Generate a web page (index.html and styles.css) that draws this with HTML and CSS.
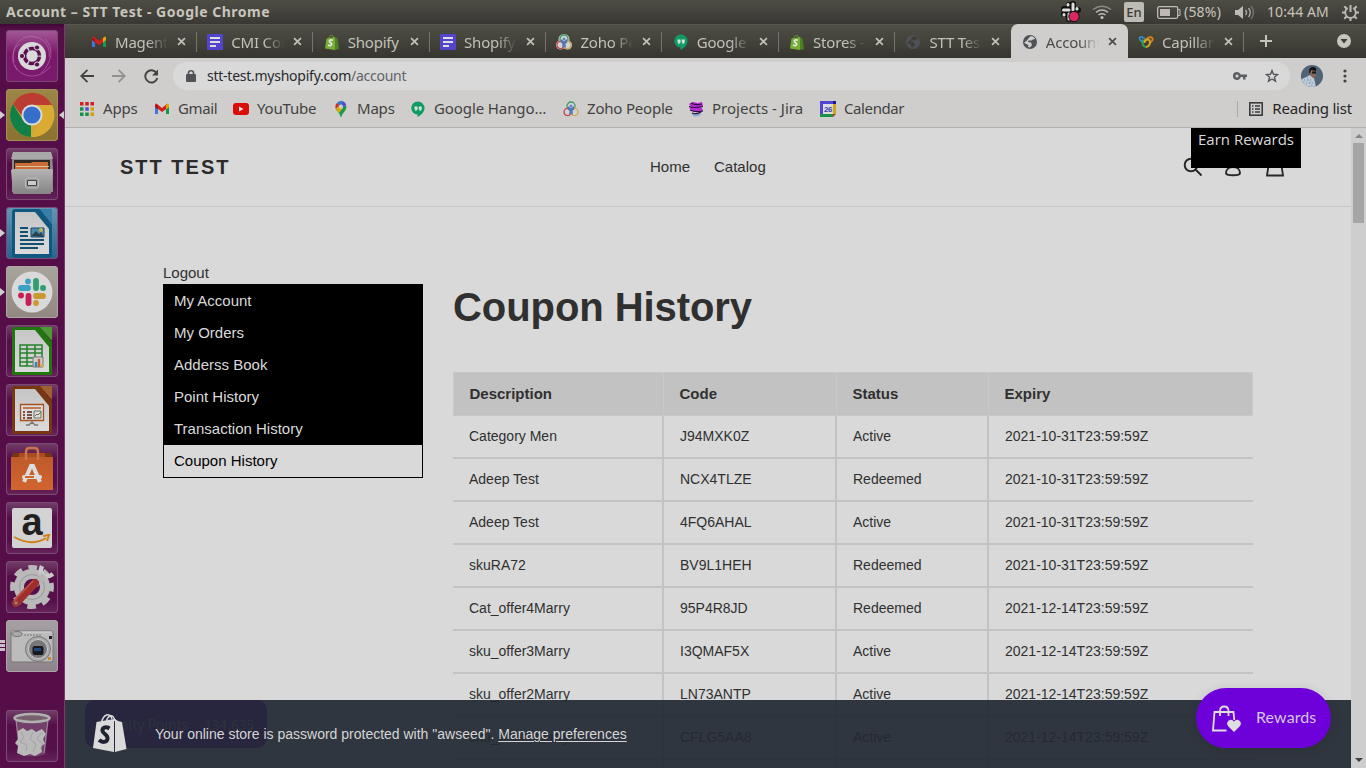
FILE: index.html
```html
<!DOCTYPE html>
<html lang="en">
<head>
<meta charset="utf-8">
<title>Account – STT Test</title>
<link rel="stylesheet" href="styles.css">
</head>
<body>
<svg class="defs" aria-hidden="true">
  <defs>
    <linearGradient id="steel" x1="0" y1="0" x2="0" y2="1"><stop offset="0" stop-color="#b4b4b4"/><stop offset="1" stop-color="#858585"/></linearGradient>
    <linearGradient id="orangeBag" x1="0" y1="0" x2="0" y2="1"><stop offset="0" stop-color="#bd5a2a"/><stop offset="1" stop-color="#d2652f"/></linearGradient>
    <linearGradient id="paper" x1="0" y1="0" x2="0" y2="1"><stop offset="0" stop-color="#c6c6c6"/><stop offset="1" stop-color="#dadada"/></linearGradient>
  </defs>
  <symbol id="gmail" viewBox="0 0 16 16"><path fill="#3b78d8" d="M1 4v9h3V7z"/><path fill="#12994b" d="M12 7v6h3V4z"/><path fill="#d5211c" d="M1 3l1.500-.5L8 7l5.500-4.500L12 8.200 8 11 4 8z"/><path fill="#a5120f" d="M1 3.500L4 5v3.500L1 6z"/><path fill="#dda80c" d="M12 4l2-1.500 1 1V6l-3 2.500z"/></symbol>
  <symbol id="forms" viewBox="0 0 16 16"><rect width="16" height="16" rx="1" fill="#5344cd"/><path stroke="#ddd" stroke-width="2" d="M3 4h10M3 8h10M3 12h6"/></symbol>
  <symbol id="shopify" viewBox="0 0 16 16"><path fill="none" stroke="#6aa12e" d="M5 5C5 0 10 0 10 5"/><path fill="#76ad34" d="M2.500 4.500L11 3v13L1 14.500z"/><path fill="#4d8022" d="M11 3l2.500 1.500L15 15l-4 1z"/><path fill="none" stroke="#e5e5e5" stroke-width="1.700" d="M9 6.300C6.500 5 5 6.500 5.500 7.700s2.500 1.100 2.200 2.700-2 1.600-3.700.7"/></symbol>
  <symbol id="zoho" viewBox="0 0 16 16"><circle cx="8" cy="5.500" r="5.500" fill="#d3d3d3"/><circle cx="4.500" cy="11" r="4.500" fill="#d3d3d3"/><circle cx="11.500" cy="11" r="4.500" fill="#d3d3d3"/><g fill="none" stroke-width="1.300"><circle cx="8" cy="5" r="4" stroke="#3a9b67"/><circle cx="4.600" cy="11" r="3.600" stroke="#c5414b"/><circle cx="11.400" cy="11" r="3.600" stroke="#cba84d"/></g><path fill="#5577b4" d="M5 5.500h6v3L9.500 10l.5 4-2-1.500L6 14l.5-4L5 8.500z"/><circle cx="8" cy="5" r="1.600" fill="#5577b4" stroke="#c3cde0" stroke-width=".7"/></symbol>
  <symbol id="hangouts" viewBox="0 0 16 16"><path fill="#109b63" d="M8 .5a6.500 6.500 0 0 0-.5 13V16c4-2 7-5 7-9A6.500 6.500 0 0 0 8 .5z"/><path fill="#d5e4dc" d="M4.500 5.500h3v3L6 10H5l.7-1.500H4.500zM8.700 5.500h3v3L10.200 10h-1l.7-1.500H8.700z"/></symbol>
  <symbol id="globe" viewBox="0 0 16 16"><circle cx="8" cy="8" r="7" fill="#4f5157"/><path fill="#cfcfcd" d="M8 2.500c2-.8 4 .2 5.200 2.500L11 5.500 9.500 6.500 6.500 6.500 6 8l3 .5 1 2.500-2 2.500-2-.5 .5-2L3 9.500 2.500 8l2-1z"/></symbol>
  <symbol id="globeDim" viewBox="0 0 16 16"><circle cx="8" cy="8" r="7" fill="#505158"/><path fill="#3d3e38" d="M8 2.500c2-.8 4 .2 5.200 2.500L11 5.500 9.500 6.500 6.500 6.500 6 8l3 .5 1 2.500-2 2.500-2-.5 .5-2L3 9.500 2.500 8l2-1z"/></symbol>
  <symbol id="capillary" viewBox="0 0 16 16"><g fill="none" stroke-width="1.900"><path stroke="#3487b8" d="M8 6C5 2.500 1 2 1.500 4.500S4 7.500 6 7"/><path stroke="#db7c18" d="M7 8c0-3 4-5.500 6.500-4.500s.5 4-2 6"/><path stroke="#2da259" d="M5 5.500c-2 4 .5 7.500 3 7.500"/><path stroke="#d3aa24" d="M8 13c3 0 5-4 3.500-6.500S6 6.500 6.500 9"/></g></symbol>
  <symbol id="close" viewBox="0 0 10 10"><path stroke="currentColor" stroke-width="1.900" d="M1.200 1.200l7.600 7.600M8.800 1.200L1.200 8.800"/></symbol>
  <symbol id="apps" viewBox="0 0 14 14"><path fill="#d31f1f" d="M0 0h3.500v3.500H0zM5.250 0h3.500v3.500h-3.500zM10.500 0H14v3.500h-3.500z"/><path fill="#129348" d="M0 5.250h3.500v3.500H0zM0 10.500h3.500V14H0zM5.250 10.500h3.500V14h-3.500z"/><path fill="#4f52cd" d="M5.250 5.250h3.500v3.500h-3.500z"/><path fill="#d19f12" d="M10.500 5.250H14v3.500h-3.500zM10.500 10.500H14V14h-3.500z"/></symbol>
  <symbol id="youtube" viewBox="0 0 16 12"><rect width="16" height="12" rx="3" fill="#d90d0a"/><path fill="#e4e4e4" d="M6 3.500v5L10.500 6z"/></symbol>
  <symbol id="maps" viewBox="0 0 12 16"><path fill="#169c4a" d="M.8 8C2 10.500 5 12 5.500 16h1C7 12 11.500 10 11.500 5.500L9 3.500z"/><path fill="#5050d1" d="M6 0a6 6 0 0 1 5.300 4L8 7 4 3z"/><path fill="#3479cf" d="M6 0Q3.500 0 1.800 2l3 3L8 .5z"/><path fill="#cf2c26" d="M1.800 2A6 6 0 0 0 .8 8l4-3.500z"/><path fill="#d7a90e" d="M.8 8l4-4L8 7l-4 5z"/><circle cx="6" cy="5.700" r="2.100" fill="#d0cfcd"/></symbol>
  <symbol id="jira" viewBox="0 0 16 16"><path fill="#b92ad2" d="M1 3l4-2 5 1 4-1 1 4-2 1 2 3-2 2-9-1-3-3 2-1z"/><path fill="#85a5d2" d="M3 12c4 2 6 1 11 0l-3 3-5 .5z"/><path fill="none" stroke="#271042" stroke-width="1.200" d="M3 2c3 2 7 2 11 1M1 5.500c4 2 9 1 14 0M2 9c4 2 8 2 13 1M4 12c3 1 6 1 9-1"/></symbol>
  <symbol id="calendar" viewBox="0 0 16 16"><path fill="#5146d3" d="M0 0h16v4H4v9H0z"/><path fill="#1f1a91" d="M13 0h3v3h-3z"/><path fill="#d2a612" d="M13 3h3v10h-3z"/><path fill="#189449" d="M0 13h13v3H0z"/><path fill="#d32724" d="M13 13h3l-3 3z"/><path fill="#dcdcdc" d="M3 3h10v10H3z"/><text x="8" y="11" class="cal-day">26</text></symbol>
  <symbol id="bag" viewBox="0 0 34 40"><path fill="none" stroke="#dadada" stroke-width="1.500" d="M8.500 10C10 1 17-1 19 6M13 10C14 3 20-1 22 8"/><path fill="#dadada" d="M3.500 9L21 6v33L0 35z"/><path fill="#dadada" d="M22 6l3 2 4 1 4.500 27-11.500 3z"/><path fill="none" stroke="#202431" stroke-width="4" d="M16.500 15.500c-4-2.500-7.500-.5-7 2.500s5.500 3.500 5 7.500-5 4.500-8.500 1.500"/></symbol>
</svg>

<header class="system-bar">
  <div class="window-title">Account – STT Test - Google Chrome</div>
  <div class="indicators">
    <svg class="ind-slack" width="22" height="22" viewBox="0 0 22 22"><g stroke-linecap="round"><path stroke="#111" stroke-width="6" d="M9 4v5M13 3v6M4 8h5M12 9h6M4 13h4M9 13v5"/><path stroke="#ddd" stroke-width="3" d="M8 3.500v.5M13 3v6M3.500 9H9M17 7.500v.5M4 14v-.5M9 13v5"/></g><circle cx="14" cy="15.500" r="5.200" fill="#d72863" stroke="#111"/></svg>
    <svg class="ind-wifi" width="20" height="14" viewBox="0 0 20 14"><g fill="none" stroke-width="1.500"><path stroke="#8b8a84" d="M1 4.500q9-6.500 18 0"/><path stroke="#b9b7b0" d="M4 7.300q6-4.500 12 0M6.500 10q3.500-2.600 7 0"/></g><circle cx="10" cy="12.500" r="1.500" fill="#c8c5bc"/></svg>
    <span class="keyboard">En</span>
    <svg class="ind-battery" width="24" height="13" viewBox="0 0 24 13"><rect x=".7" y=".7" width="20" height="11.600" rx="1.500" fill="none" stroke="#bdbbb4" stroke-width="1.300"/><path fill="#bdb9b2" d="M3 3h10v7H3z"/><path fill="none" stroke="#bdbbb4" d="M21 3.500h2v6h-2"/></svg>
    <span class="percent">(58%)</span>
    <svg class="ind-sound" width="20" height="15" viewBox="0 0 20 15"><path fill="#bdbbb4" d="M0 5h3l5-4v13l-5-4H0z"/><g fill="none" stroke="#a8a69f" stroke-width="1.500"><path d="M10.500 5q2 2.500 0 5M13.500 3q3.500 4.500 0 9"/><path stroke="#73716b" d="M16 1q5 6.500 0 13"/></g></svg>
    <span class="clock">10:44 AM</span>
    <svg class="ind-gear" width="17" height="17" viewBox="0 0 17 17"><g fill="none" stroke="#bdbbb4"><path stroke-width="1.800" d="M5.800 4A5.300 5.300 0 1 0 11.200 4"/><path stroke-width="2" d="M8.500 1v7M8.500 14v3M0 8.500h3M14 8.500h3M2.300 2.300l2.200 2.200M12.500 12.500l2.200 2.200M2.300 14.700l2.200-2.200M12.500 4.500l2.200-2.200"/></g></svg>
  </div>
</header>

<div class="desktop">
<nav class="launcher">
  <div class="tile dash"><svg viewBox="0 0 52 52"><g fill="none" stroke="#b980af" stroke-opacity=".55"><path d="M8 32C4 12 20 4 29 7M39 9c12 12 3 28-4 34M45 36C30 54 11 44 9 35M28 7c10 0 17 11 15 20M11 40C2 27 9 16 14 14"/></g><circle cx="26" cy="26" r="14" fill="#d9d9d9"/><circle cx="26" cy="26" r="7.500" fill="none" stroke="#5a1150" stroke-width="3.500" stroke-dasharray="14.300 1.400" transform="rotate(5 26 26)"/><g fill="#5a1150" stroke="#d9d9d9"><circle cx="16" cy="26" r="2.600"/><circle cx="31" cy="17.500" r="2.600"/><circle cx="31" cy="34.500" r="2.600"/></g></svg></div>
  <div class="tile chrome running focused"><svg viewBox="0 0 52 52"><circle cx="26" cy="26" r="22" fill="#d5a72d"/><path fill="#bb3c33" d="M7 15A22 22 0 0 1 46 16H26L16 27z"/><path fill="#118047" d="M7 15l10 16 8 5v12A22 22 0 0 1 7 15z"/><path fill="#d9ab32" d="M26 16h20a22 22 0 0 1-20.500 32L35 31z"/><circle cx="26" cy="26" r="10.500" fill="#dadada"/><circle cx="26" cy="26" r="8.600" fill="#356fc9"/></svg></div>
  <div class="tile"><svg viewBox="0 0 52 52"><path fill="#8b8b8b" d="M6 6h40l1 16v22H6z"/><path fill="#a9a9a9" d="M7 4h38l2 7H5z"/><path fill="#2e2925" d="M8 12h36v12H8z"/><path fill="#ca6e35" d="M9 15h16l1-1h16v8H9z"/><path stroke="#e0c3a4" d="M10 18.500h33"/><path fill="url(#steel)" d="M7 21h38l2 1-2 24H7L5 22z"/><rect x="19.500" y="30" width="13" height="10" rx="2" fill="#999" stroke="#bbb"/><path fill="#ccc" stroke="#444" d="M21.500 32.500h9v5h-9z"/></svg></div>
  <div class="tile writer running"><svg viewBox="0 0 52 52"><path fill="#125780" d="M8 2h26l12 15v31q0 3-3 3H9q-3 0-3-3V4z"/><path fill="url(#paper)" d="M9 5h20l14 17v25H9z"/><path fill="#397ea7" d="M34 2h12v15z"/><g stroke="#134f70" stroke-width="2"><path d="M14 21h8M14 25h8M14 29h8M14 33h24M14 37h24M14 41h18"/></g><path fill="#518bab" stroke="#134f70" d="M25 21h13v9H25z"/><path fill="#28434e" d="M25 29l5-5 3 3 2-2 3 5z"/><circle cx="35" cy="23" r="2" fill="#c1b44c"/></svg></div>
  <div class="tile slack running"><svg viewBox="0 0 52 52"><circle cx="26" cy="26" r="20.500" fill="#d9d9d9"/><g stroke-width="5.800" stroke-linecap="round"><path stroke="#3ba1c4" d="M15 22h7M22 15.300v.1"/><path stroke="#329d70" d="M30 15v7M37 22h.1"/><path stroke="#c61f55" d="M15 29.500h.1M22.500 30v7"/><path stroke="#c99932" d="M30 30h7M30 37v.1"/></g></svg></div>
  <div class="tile"><svg viewBox="0 0 52 52"><path fill="#217610" d="M8 2h26l12 15v31q0 2-3 2H9q-3 0-3-2V4z"/><path fill="url(#paper)" d="M9 5h20l14 17v25H9z"/><path fill="#4e9a36" d="M34 2h12v14z"/><path fill="none" stroke="#24822c" stroke-width="1.500" d="M14 20h22v21H14zM21 20v21M29 20v21M14 24h22M14 28h22M14 33h22M14 37h22"/><path fill="#ccc" stroke="#777" d="M27 32h10v10H27z"/><path stroke="#3586bb" stroke-width="2.500" d="M30 37v5"/><path stroke="#c36034" stroke-width="2.500" d="M33 34v8"/><path stroke="#d2af28" stroke-width="2" d="M36 39v3"/></svg></div>
  <div class="tile"><svg viewBox="0 0 52 52"><path fill="#783713" d="M8 2h26l12 15v31q0 2-3 2H9q-3 0-3-2V4z"/><path fill="url(#paper)" d="M9 5h20l14 17v25H9z"/><path fill="#a0602f" d="M34 2h12v14z"/><path fill="#ddd" stroke="#a6521f" stroke-width="1.300" d="M14.500 20.500h23v16h-23z"/><path stroke="#bd612b" stroke-width="1.600" d="M17 24h18"/><path stroke="#552414" stroke-width="1.600" d="M17 28h2M21 28h5M17 31h2M21 31h5M17 34h2M21 34h5"/><path fill="none" stroke="#65755f" d="M28 27h7v7h-7zM29 32l2-2 1 1 3-3"/><path fill="none" stroke="#777" stroke-width="1.500" d="M20 41h3l3-3 3 3h3"/></svg></div>
  <div class="tile"><svg viewBox="0 0 52 52"><path fill="#783514" d="M7 10h38l2 5H5z"/><path fill="#a94d22" d="M13 10h26v5H13z"/><path fill="url(#orangeBag)" d="M5 14h42v33H5z"/><path fill="none" stroke="#cc744b" stroke-width="2.500" d="M20 17V9q0-4 4-4h4q4 0 4 4v8"/><path fill="none" stroke="#ddd" stroke-width="4" d="M18 39l7-16h2l7 16"/><path stroke="#ddd" stroke-width="4" stroke-linecap="round" d="M18 34h16"/><path stroke="#d26427" stroke-width="2" d="M19 34h9"/></svg></div>
  <div class="tile"><svg viewBox="0 0 52 52"><rect x="6" y="6" width="40" height="40" rx="2" fill="#d3d3d3"/><text x="26" y="33" class="amazon-a">a</text><path fill="none" stroke="#d18217" stroke-width="2" d="M8 35q18 10 32 1M37 34l6-1-2 6"/></svg></div>
  <div class="tile"><svg viewBox="0 0 52 52"><g fill="none" stroke="#b9b9b9"><circle cx="26" cy="26" r="19.500" stroke-width="5" stroke-dasharray="8.500 6.816" transform="rotate(-12 26 26)"/><circle cx="26" cy="26" r="13" stroke-width="10"/></g><circle cx="26" cy="26" r="12.500" fill="none" stroke="#999"/><path fill="none" stroke="#c9c9c9" stroke-width="4.500" d="M36 5c-4 9 4 13 11 8"/><path stroke="#b5b5b5" stroke-width="6" d="M29 24l9-10"/><path stroke="#9f2f2c" stroke-width="8" stroke-linecap="round" d="M10 42l19-20"/><path stroke="#c15349" stroke-width="1.500" d="M8 40l19-20"/><circle cx="10" cy="42" r="1.700" fill="#8d8181"/></svg></div>
  <div class="tile camera"><svg viewBox="0 0 52 52"><rect x="5" y="11" width="42" height="31" rx="2" fill="#bcbcbc" stroke="#777"/><path stroke="#d6d6d6" d="M6 12h40"/><ellipse cx="11" cy="14" rx="5" ry="2.500" fill="#aaa" stroke="#777"/><path stroke="#777" stroke-dasharray="2 1" d="M18 15h17"/><circle cx="32" cy="29" r="12.500" fill="#aaa" stroke="#777"/><circle cx="32" cy="29" r="9.500" fill="#777" stroke="#ccc"/><rect x="26.500" y="26" width="11" height="9" rx="2" fill="#171b21"/><path fill="#204775" d="M28 28h7v3h-7z"/><path fill="#222" d="M43 16h3v3h-3z"/><path fill="#ca882b" d="M42 37h3v3h-3z"/></svg><i class="windows"></i></div>
  <div class="tile trash"><svg viewBox="0 0 52 52"><path fill="#794c73" fill-opacity=".8" d="M9 8h34l-4 36q-13 5-26 0z"/><path stroke="#a08d9d" d="M10 9l4 34M42 9l-4 34"/><path fill="#b9b9b9" d="M12 21l5-3 4 3 5-2 4 3 6-3 4 5-3 5 2 5-4 2 1 6-7 4-5-2-6 2-7-3 1-7-3-3 3-4z"/><path fill="none" stroke="#a2a2a2" d="M15 22l3 5-4 5 7 3-1 6M27 22l-3 7 6 5-3 8M36 22l-5 7 6 5-3 5"/><ellipse cx="26" cy="8" rx="17.500" ry="4" fill="#78606f" stroke="#b1b0b0" stroke-width="2.500"/></svg></div>
</nav>

<main class="browser">
  <div class="tabs">
    <div class="tab"><svg class="icon"><use href="#gmail"/></svg><span>Magento</span><svg class="x"><use href="#close"/></svg></div>
    <div class="tab"><svg class="icon"><use href="#forms"/></svg><span>CMI Con</span><svg class="x"><use href="#close"/></svg></div>
    <div class="tab"><svg class="icon"><use href="#shopify"/></svg><span class="whole">Shopify</span><svg class="x"><use href="#close"/></svg></div>
    <div class="tab"><svg class="icon"><use href="#forms"/></svg><span>Shopify</span><svg class="x"><use href="#close"/></svg></div>
    <div class="tab"><svg class="icon"><use href="#zoho"/></svg><span>Zoho Pe</span><svg class="x"><use href="#close"/></svg></div>
    <div class="tab"><svg class="icon"><use href="#hangouts"/></svg><span>Google</span><svg class="x"><use href="#close"/></svg></div>
    <div class="tab"><svg class="icon"><use href="#shopify"/></svg><span>Stores -</span><svg class="x"><use href="#close"/></svg></div>
    <div class="tab before-active"><svg class="icon"><use href="#globeDim"/></svg><span>STT Test</span><svg class="x"><use href="#close"/></svg></div>
    <div class="tab active"><svg class="icon"><use href="#globe"/></svg><span>Account</span><svg class="x"><use href="#close"/></svg></div>
    <div class="tab"><svg class="icon"><use href="#capillary"/></svg><span>Capillary</span><svg class="x"><use href="#close"/></svg></div>
    <svg class="new-tab" width="12" height="12"><path stroke="#c5c4bd" stroke-width="2" d="M6 0v12M0 6h12"/></svg>
    <svg class="tab-menu" width="14" height="14"><circle cx="7" cy="7" r="7" fill="#c5c4bd"/><path fill="#3c3c35" d="M3.500 5h7L7 9.500z"/></svg>
  </div>

  <div class="toolbar">
    <svg class="back" width="14" height="14"><path fill="none" stroke="#424342" stroke-width="1.800" d="M14 7H1M7.500.8L1.200 7l6.300 6.200"/></svg>
    <svg class="forward" width="14" height="14"><path fill="none" stroke="#92918f" stroke-width="1.800" d="M0 7h13M6.500.8L12.800 7l-6.300 6.200"/></svg>
    <svg class="reload" width="15" height="15"><path fill="none" stroke="#424342" stroke-width="1.900" d="M12.500 4A6.100 6.100 0 1 0 13.300 9"/><path fill="#424342" d="M14 .5v6H8z"/></svg>
    <div class="address">
      <svg width="10" height="12"><path fill="none" stroke="#515256" stroke-width="1.600" d="M2.500 5V3q0-2.200 2.500-2.200T7.500 3v2"/><rect x="0" y="4" width="10" height="8" rx="1" fill="#515256"/></svg>
      <span class="url">stt-test.myshopify.com<b>/account</b></span>
      <svg class="key" width="14" height="8"><path fill="#5c5e61" fill-rule="evenodd" d="M4 0a4 4 0 1 0 3.800 5H10v2.500h2.500V5H14V2.500H7.700A4 4 0 0 0 4 0zM4 2.500a1.500 1.500 0 1 1 0 3 1.500 1.500 0 0 1 0-3z"/></svg>
      <svg class="star" width="14" height="14" viewBox="0 0 14 14"><path fill="none" stroke="#56585c" stroke-width="1.400" d="M7 1.500l1.500 3.800 4.100.3-3.200 2.600 1.100 4L7 10l-3.500 2.200 1.100-4L1.400 5.600l4.100-.3z"/></svg>
    </div>
    <svg class="avatar" width="22" height="22"><clipPath id="avatarClip"><circle cx="11" cy="11" r="11"/></clipPath><g clip-path="url(#avatarClip)"><path fill="#516377" d="M0 0h22v22H0z"/><path fill="#bdc8d5" d="M0 22L1 14l8-4 4 3 2 9z"/><path fill="#8b6557" d="M9 5h6v6l-3 2-3-3z"/><path fill="#151414" d="M8 7q0-5 4-5 4 0 3 4l-5-1-1 4z"/><path stroke="#161719" stroke-width="2" d="M11 7.500h4"/><path stroke="#7193b8" stroke-dasharray="1 2" d="M3 15h9M2 18h12M6 12l5 9"/></g></svg>
    <svg class="dots" width="4" height="14"><g fill="#454544"><circle cx="2" cy="2" r="1.600"/><circle cx="2" cy="7" r="1.600"/><circle cx="2" cy="12" r="1.600"/></g></svg>
  </div>

  <div class="bookmarks">
    <div class="mark m-apps"><svg width="14" height="14"><use href="#apps"/></svg><span>Apps</span></div>
    <div class="mark m-gmail"><svg width="16" height="16"><use href="#gmail"/></svg><span>Gmail</span></div>
    <div class="mark m-youtube"><svg width="16" height="12"><use href="#youtube"/></svg><span>YouTube</span></div>
    <div class="mark m-maps"><svg width="12" height="16"><use href="#maps"/></svg><span>Maps</span></div>
    <div class="mark m-hangouts"><svg width="16" height="16"><use href="#hangouts"/></svg><span>Google Hango…</span></div>
    <div class="mark m-zoho"><svg width="16" height="16"><use href="#zoho"/></svg><span>Zoho People</span></div>
    <div class="mark m-jira"><svg width="16" height="16"><use href="#jira"/></svg><span>Projects - Jira</span></div>
    <div class="mark m-calendar"><svg width="16" height="16"><use href="#calendar"/></svg><span>Calendar</span></div>
    <div class="reading"><svg width="14" height="14"><rect x=".8" y=".8" width="12.400" height="12.400" fill="none" stroke="#3b3c3d" stroke-width="1.600"/><path stroke="#3b3c3d" stroke-width="1.400" d="M3 4h1.500M3 7h1.500M3 10h1.500M6 4h5M6 7h5M6 10h5"/></svg><span>Reading list</span></div>
  </div>

  <div class="viewport">
    <div class="page">
      <header class="store-header">
        <div class="store-name">STT TEST</div>
        <nav class="store-nav"><a>Home</a><a>Catalog</a></nav>
        <div class="store-icons">
          <svg width="20" height="20"><g fill="none" stroke="#282828" stroke-width="2"><circle cx="8" cy="8" r="6.300"/><path d="M12.500 12.500l6 6"/></g></svg>
          <svg class="person" width="16" height="20"><g fill="none" stroke="#282828" stroke-width="2"><circle cx="8" cy="5" r="4"/><path d="M8 10c-4 0-7 2.500-7 6 0 3 14 3 14 0 0-3.500-3-6-7-6z"/></g></svg>
          <svg class="cart" width="18" height="20"><path fill="none" stroke="#282828" stroke-width="1.800" d="M3 5h12l2 13.500H1zM6 6q0-5 3-5t3 5"/></svg>
        </div>
        <div class="earn">Earn Rewards</div>
      </header>
      <div class="account">
        <aside>
          <a class="logout">Logout</a>
          <ul class="menu"><li>My Account</li><li>My Orders</li><li>Adderss Book</li><li>Point History</li><li>Transaction History</li><li class="current">Coupon History</li></ul>
        </aside>
        <section class="history">
          <h1>Coupon History</h1>
          <table>
            <thead><tr><th class="c1">Description</th><th class="c2">Code</th><th class="c3">Status</th><th>Expiry</th></tr></thead>
            <tbody>
              <tr><td>Category Men</td><td>J94MXK0Z</td><td>Active</td><td>2021-10-31T23:59:59Z</td></tr>
              <tr><td>Adeep Test</td><td>NCX4TLZE</td><td>Redeemed</td><td>2021-10-31T23:59:59Z</td></tr>
              <tr><td>Adeep Test</td><td>4FQ6AHAL</td><td>Active</td><td>2021-10-31T23:59:59Z</td></tr>
              <tr><td>skuRA72</td><td>BV9L1HEH</td><td>Redeemed</td><td>2021-10-31T23:59:59Z</td></tr>
              <tr><td>Cat_offer4Marry</td><td>95P4R8JD</td><td>Redeemed</td><td>2021-12-14T23:59:59Z</td></tr>
              <tr><td>sku_offer3Marry</td><td>I3QMAF5X</td><td>Active</td><td>2021-12-14T23:59:59Z</td></tr>
              <tr><td>sku_offer2Marry</td><td>LN73ANTP</td><td>Active</td><td>2021-12-14T23:59:59Z</td></tr>
              <tr><td>sku_offer1Marry</td><td>CFLG5AA8</td><td>Active</td><td>2021-12-14T23:59:59Z</td></tr>
              <tr><td></td><td></td><td></td><td></td></tr>
            </tbody>
          </table>
        </section>
      </div>
      <div class="points"><span>Loyalty Points</span><span>134,635</span></div>
      <div class="password-bar"><svg width="34" height="40"><use href="#bag"/></svg><p>Your online store is password protected with "awseed". <a>Manage preferences</a></p></div>
      <button class="rewards"><svg width="29" height="27"><g fill="none" stroke="#dedede" stroke-width="1.800"><path d="M14.500 25.500H1L2.500 7h19l.8 8"/><path d="M8 11V6q0-4.500 4.200-4.500T16.500 6v5"/></g><path fill="#dedede" d="M22 27l-6-6q-2-3 .5-5.300 3-2.200 5.500.8 2.500-3 5.500-.8 2.500 2.300.5 5.300z"/></svg><span>Rewards</span></button>
    </div>
    <div class="scrollbar"><i class="up"></i><div class="thumb"></div><i class="down"></i></div>
  </div>
</main>
</div>
</body>
</html>
```

FILE: styles.css
```css
* { box-sizing: border-box; }
body {
  margin: 0;
  width: 1366px;
  height: 768px;
  overflow: hidden;
  display: flex;
  flex-direction: column;
  font-family: "Noto Sans", "Open Sans", sans-serif;
  background: #d9d9d9;
}
svg { display: block; flex: none; }
.defs { position: absolute; width: 0; height: 0; }
.cal-day { font: bold 8px "Liberation Sans", sans-serif; text-anchor: middle; fill: #3939b4; }
.amazon-a { font: bold 38px "Liberation Sans", sans-serif; text-anchor: middle; fill: #202020; }

/* system bar */
.system-bar {
  flex: none;
  height: 24px;
  display: flex;
  justify-content: space-between;
  align-items: center;
  padding: 0 7px 0 6px;
  background: linear-gradient(#4e4d44, #393834);
  color: #c8c5bc;
  font-size: 14px;
}
.window-title { font-weight: 700; font-size: 14px; line-height: 24px; letter-spacing: .5px; white-space: nowrap; }
.indicators { display: flex; align-items: center; white-space: nowrap; }
.ind-slack { margin-right: 10px; }
.ind-wifi { margin-right: 12px; }
.keyboard { width: 20px; height: 20px; line-height: 20px; border-radius: 2px; background: #bdbbb4; color: #3c3b36; text-align: center; font-size: 13px; font-weight: 500; margin-right: 13px; }
.ind-battery { margin-right: 3px; }
.percent { width: 38px; letter-spacing: .2px; margin-right: 13px; line-height: 20px; }
.ind-sound { margin-right: 12px; }
.clock { width: 63px; letter-spacing: .1px; margin-right: 12px; line-height: 20px; }

/* launcher */
.desktop { flex: 1; display: flex; min-height: 0; }
.launcher {
  width: 65px;
  flex: none;
  display: flex;
  flex-direction: column;
  gap: 7px;
  padding: 6px 0 6px 6px;
  background: linear-gradient(#3f0a37, #560e49 5px);
  border-right: 1px solid #763a6c;
}
.tile { position: relative; width: 52px; height: 52px; flex: none; border-radius: 4px; background: linear-gradient(#724068, #560e49 30%, #55104a 75%, #662459); box-shadow: inset 0 0 0 1px #7c4b75; }
.tile svg { width: 52px; height: 52px; }
.dash { background: linear-gradient(#a45b98, #7b176c 45%, #7b1b6d); }
.chrome { background: linear-gradient(#9c8648, #8b712f); box-shadow: inset 0 0 0 1px #a39057; }
.writer { background: linear-gradient(#6497b4, #25658e); }
.slack { background: linear-gradient(#aaa49e, #908780); box-shadow: inset 0 0 0 1px #aaa59f; }
.camera { background: linear-gradient(#a7a0a5, #8e838b); box-shadow: inset 0 0 0 1px #aaa3a8; }
.trash { margin-top: auto; }
.running::before, .focused::after { content: ""; position: absolute; top: 22px; border: 4px solid transparent; }
.running::before { left: -6px; border-left: 5px solid #cfcfcf; border-right: 0; }
.focused::after { right: -6px; border-right: 5px solid #cfcfcf; border-left: 0; }
.windows { position: absolute; left: -6px; top: 20px; width: 5px; height: 11px; background: repeating-linear-gradient(#c9bdc7 0 3px, transparent 3px 4px); }

/* browser frame */
.browser { flex: 1; min-width: 0; display: flex; flex-direction: column; }
.tabs { height: 34px; flex: none; display: flex; padding-left: 15.500px; background: linear-gradient(#4f4e45, #363630); border-top: 1px solid #58564b; }
.tab { width: 116.350px; flex: none; display: flex; align-items: center; padding: 0 9px 0 10.500px; color: #c2c1b9; position: relative; font-size: 15px; }
.tab .icon { width: 16px; height: 16px; }
.tab span { width: 53px; margin: 0 0 0 8px; overflow: hidden; white-space: nowrap; letter-spacing: -.2px; line-height: 24px; -webkit-mask-image: linear-gradient(90deg, #000 62%, transparent); mask-image: linear-gradient(90deg, #000 62%, transparent); }
.tab .whole { -webkit-mask-image: none; mask-image: none; }
.tab .x { width: 9px; height: 9px; margin-left: auto; margin-right: 2px; }
.tab::after { content: ""; position: absolute; right: 0; top: 7px; width: 1px; height: 20px; background: #77766e; }
.active { background: #cfcecc; color: #4b4b49; border-radius: 7px 7px 0 0; margin-top: -1px; padding-top: 1px; }
.active::after, .before-active::after { display: none; }
.new-tab { margin: 10px 0 0 16px; }
.tab-menu { margin: 9px 15px 0 auto; }
.toolbar { height: 36px; flex: none; display: flex; align-items: center; padding: 0 19px 0 15px; background: #cfcecc; }
.forward { margin-left: 18px; }
.reload { margin-left: 18px; }
.address { width: 1117px; height: 28px; margin-left: 14px; border-radius: 14px; background: #d9d9d9; display: flex; align-items: center; padding: 0 11px 0 13px; }
.url { margin-left: 11px; font-size: 14px; color: #292a2c; line-height: 24px; letter-spacing: -.25px; }
.url b { font-weight: 400; color: #626365; }
.key { margin-left: auto; }
.star { margin-left: 18px; }
.avatar { margin-left: 11px; }
.dots { margin-left: auto; }
.bookmarks { height: 34px; flex: none; display: flex; align-items: center; padding: 0 14px 4px 15px; background: #cfcecc; border-bottom: 1px solid #b0afad; font-size: 15px; color: #424341; white-space: nowrap; }
.mark { display: flex; align-items: center; gap: 8px; flex: none; letter-spacing: -.2px; }
.mark span, .reading span { margin-top: -2px; }
.m-apps { width: 74px; gap: 9px; }
.m-gmail { width: 79px; letter-spacing: -.4px; }
.m-youtube { width: 102px; }
.m-maps { width: 75px; gap: 10px; }
.m-hangouts { width: 153px; letter-spacing: -.1px; }
.m-zoho { width: 125px; }
.m-jira { width: 132px; letter-spacing: 0; }
.m-calendar { width: 100px; letter-spacing: -.4px; }
.reading { margin-left: auto; display: flex; align-items: center; gap: 9px; border-left: 1px solid #a9a9a7; padding-left: 11px; height: 16px; color: #252626; letter-spacing: -.2px; }

/* store page */
.viewport { flex: 1; min-height: 0; display: flex; }
.page { position: relative; width: 1286px; flex: none; overflow: hidden; background: #d9d9d9; color: #303030; font-family: "Liberation Sans", Arial, sans-serif; }
.store-header { position: relative; height: 79px; display: flex; align-items: center; padding: 0 67px 0 55px; border-bottom: 1px solid #c7c7c7; }
.store-name { width: 530px; font-size: 20px; font-weight: 700; letter-spacing: 2px; color: #2b2b2b; }
.store-nav { display: flex; gap: 24px; font-size: 15px; padding-bottom: 2px; }
.store-icons { margin-left: auto; display: flex; align-items: center; }
.person { margin-left: 22px; }
.cart { margin-left: 25px; }
.earn { position: absolute; top: 0; right: 50px; width: 110px; height: 40px; background: #000; color: #dadada; text-align: center; font: 15px/22px "Open Sans", sans-serif; white-space: nowrap; }
.account { display: flex; gap: 30px; padding: 55px 0 0 98px; }
aside { width: 260px; flex: none; font-size: 15px; }
.logout { display: block; line-height: 22px; }
.menu { list-style: none; margin: 0; padding: 0; border: 1px solid #000; background: #000; color: #dadada; }
.menu li { height: 32px; line-height: 31px; padding-left: 10px; }
.menu .current { background: #d9d9d9; color: #000; }
.history { width: 800px; }
.history h1 { margin: 22px 0 42px; font-size: 40px; line-height: 46px; height: 46px; letter-spacing: -.07px; }
table { width: 800px; table-layout: fixed; border-collapse: separate; border-spacing: 0; font-size: 14px; }
th, td { padding: 0 0 2px 16px; text-align: left; height: 43px; border-right: 2px solid #c3c3c3; border-bottom: 2px solid #c3c3c3; }
th { height: 44px; padding-left: 15.500px; background: #c2c2c2; font-size: 15px; border: 1px solid #c8c8c8; border-left: 0; }
th:first-child { border-left: 1px solid #c8c8c8; }
td:last-child { border-right: 0; }
.c1 { width: 211px; }
.c2 { width: 173px; }
.c3 { width: 152px; }
.points { position: absolute; left: 20px; bottom: 20px; width: 182px; height: 48px; border-radius: 10px; background: #6e00d8; display: flex; align-items: center; justify-content: space-between; padding: 0 13px 0 13px; color: #a4b098; font: 14px "Noto Sans CJK SC", sans-serif; white-space: nowrap; letter-spacing: -.1px; }
.password-bar { position: absolute; left: 0; bottom: 0; width: 1286px; height: 68px; background: rgba(34, 41, 51, .93); display: flex; align-items: center; padding-left: 28px; color: #d5d5d5; font-size: 14px; }
.password-bar svg { margin-top: -2px; }
.password-bar p { margin: 0 0 0 28px; }
.password-bar a { text-decoration: underline; text-underline-offset: 2px; }
.rewards { position: absolute; right: 20px; bottom: 20px; width: 135px; height: 60px; border: 0; border-radius: 30px; padding: 0 0 0 16px; background: #6e00d9; display: flex; align-items: center; color: #d5c6e5; font: 16px Lato, sans-serif; box-shadow: 0 2px 12px rgba(0, 0, 0, .12); }
.rewards span { margin: -3px 0 0 15px; letter-spacing: .1px; }
.scrollbar { width: 15px; background: #cecece; display: flex; flex-direction: column; align-items: center; }
.thumb { width: 11px; height: 80px; background: #a5a5a5; }
.up { margin: 6px 0 5px; border: 4px solid transparent; border-top: 0; border-bottom-color: #858585; }
.down { margin: auto 0 6px; border: 4px solid transparent; border-bottom: 0; border-top-color: #404040; }
```
